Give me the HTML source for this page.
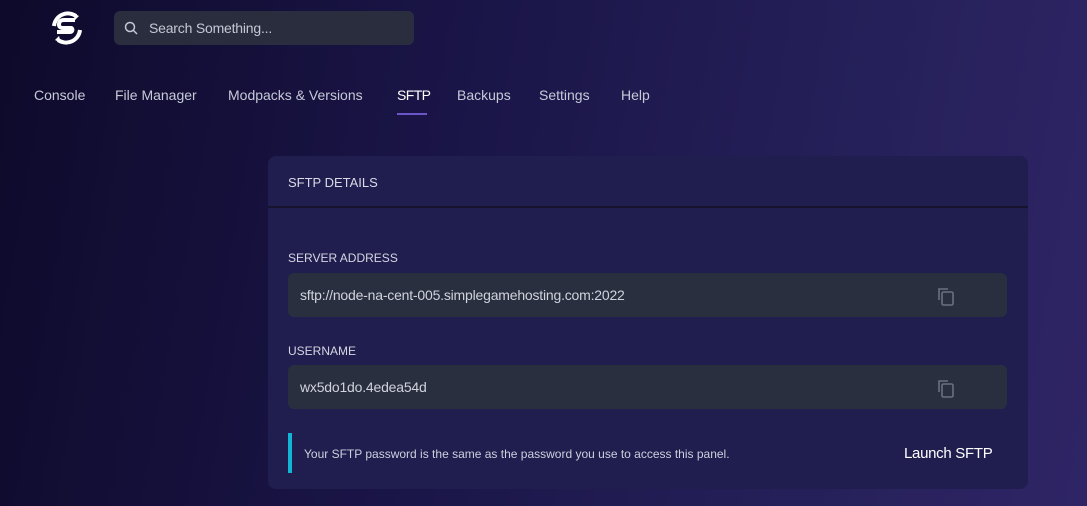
<!DOCTYPE html>
<html><head><meta charset="utf-8"><style>
*{margin:0;padding:0;box-sizing:border-box}
body{width:1087px;height:506px;overflow:hidden;font-family:"Liberation Sans",sans-serif;
background:linear-gradient(100deg,#0e0a2b 0%,#1a1547 40%,#252059 75%,#2f2566 100%);position:relative;color:#cfd3e0}
.abs{position:absolute}
.search{left:114px;top:11px;width:300px;height:34px;background:#2a2d3e;border-radius:6px}
.search span{position:absolute;left:35px;top:9px;font-size:14px;color:#c4c8d4;letter-spacing:-0.2px}
.nav{top:87px;font-size:14px;color:#c6cad8;white-space:nowrap}
.card{left:268px;top:156px;width:760px;height:333px;background:#201d4f;border-radius:8px}
.head{position:absolute;left:0;top:0;width:760px;height:52px;border-bottom:2px solid #16132f;border-radius:8px 8px 0 0}
.lab{font-size:12px;color:#d4d7e2;position:absolute;left:20px}
.box{position:absolute;left:20px;width:719px;height:44px;background:#2a2f40;border-radius:6px}
.box span{position:absolute;left:12px;top:14px;font-size:14px;color:#d0d3dd;letter-spacing:-0.2px}
.box svg{position:absolute;left:647px;top:12px}
</style></head><body>
<svg class="abs" style="left:49px;top:10px" width="36" height="36" viewBox="0 0 36 36">
<path d="M27 6 A14 14 0 0 0 5 16" fill="none" stroke="#fff" stroke-width="4"/>
<path d="M9 30 A14 14 0 0 0 31 20" fill="none" stroke="#fff" stroke-width="4"/>
<path d="M26 10 H15 C11 10 10 12 10 15 C10 17 12 18 14 18 H22 C24 18 24 22 21 22 H8" fill="none" stroke="#fff" stroke-width="4" stroke-linejoin="round"/>
<path d="M24 3 L30 6 L26 10 Z M12 33 L6 30 L10 26 Z" fill="#fff"/>
</svg>
<div class="abs search">
<svg class="abs" style="left:10px;top:10px" width="14" height="14" viewBox="0 0 14 14"><circle cx="6" cy="6" r="4.5" fill="none" stroke="#c4c8d4" stroke-width="1.5"/><path d="M9.5 9.5 L13 13" stroke="#c4c8d4" stroke-width="1.5"/></svg>
<span>Search Something...</span></div>
<div class="abs nav" style="left:34px">Console</div>
<div class="abs nav" style="left:115px">File Manager</div>
<div class="abs nav" style="left:228px">Modpacks &amp; Versions</div>
<div class="abs nav" style="left:397px;color:#fff;letter-spacing:-0.6px">SFTP</div>
<div class="abs" style="left:397px;top:113px;width:30px;height:2px;background:#6b56c9"></div>
<div class="abs nav" style="left:457px">Backups</div>
<div class="abs nav" style="left:539px">Settings</div>
<div class="abs nav" style="left:621px">Help</div>
<div class="abs card">
<div class="head"><div style="position:absolute;left:20px;top:19px;font-size:13px;color:#d8dbe6">SFTP DETAILS</div></div>
<div class="lab" style="top:95px">SERVER ADDRESS</div>
<div class="box" style="top:117px"><span>sftp://node-na-cent-005.simplegamehosting.com:2022</span>
<svg width="22" height="22" viewBox="0 0 22 22"><path d="M4 15 V4 H13" fill="none" stroke="#6b7080" stroke-width="1.6"/><rect x="7" y="7" width="11" height="13" rx="1.5" fill="none" stroke="#6b7080" stroke-width="1.6"/></svg></div>
<div class="lab" style="top:188px">USERNAME</div>
<div class="box" style="top:209px"><span>wx5do1do.4edea54d</span>
<svg width="22" height="22" viewBox="0 0 22 22"><path d="M4 15 V4 H13" fill="none" stroke="#6b7080" stroke-width="1.6"/><rect x="7" y="7" width="11" height="13" rx="1.5" fill="none" stroke="#6b7080" stroke-width="1.6"/></svg></div>
<div style="position:absolute;left:20px;top:277px;width:4px;height:40px;background:#12b5d6"></div>
<div style="position:absolute;left:36px;top:291px;font-size:12px;color:#ccd0dc">Your SFTP password is the same as the password you use to access this panel.</div>
<div style="position:absolute;left:636px;top:289px;font-size:15px;color:#fff;letter-spacing:-0.3px">Launch SFTP</div>
</div>
</body></html>
